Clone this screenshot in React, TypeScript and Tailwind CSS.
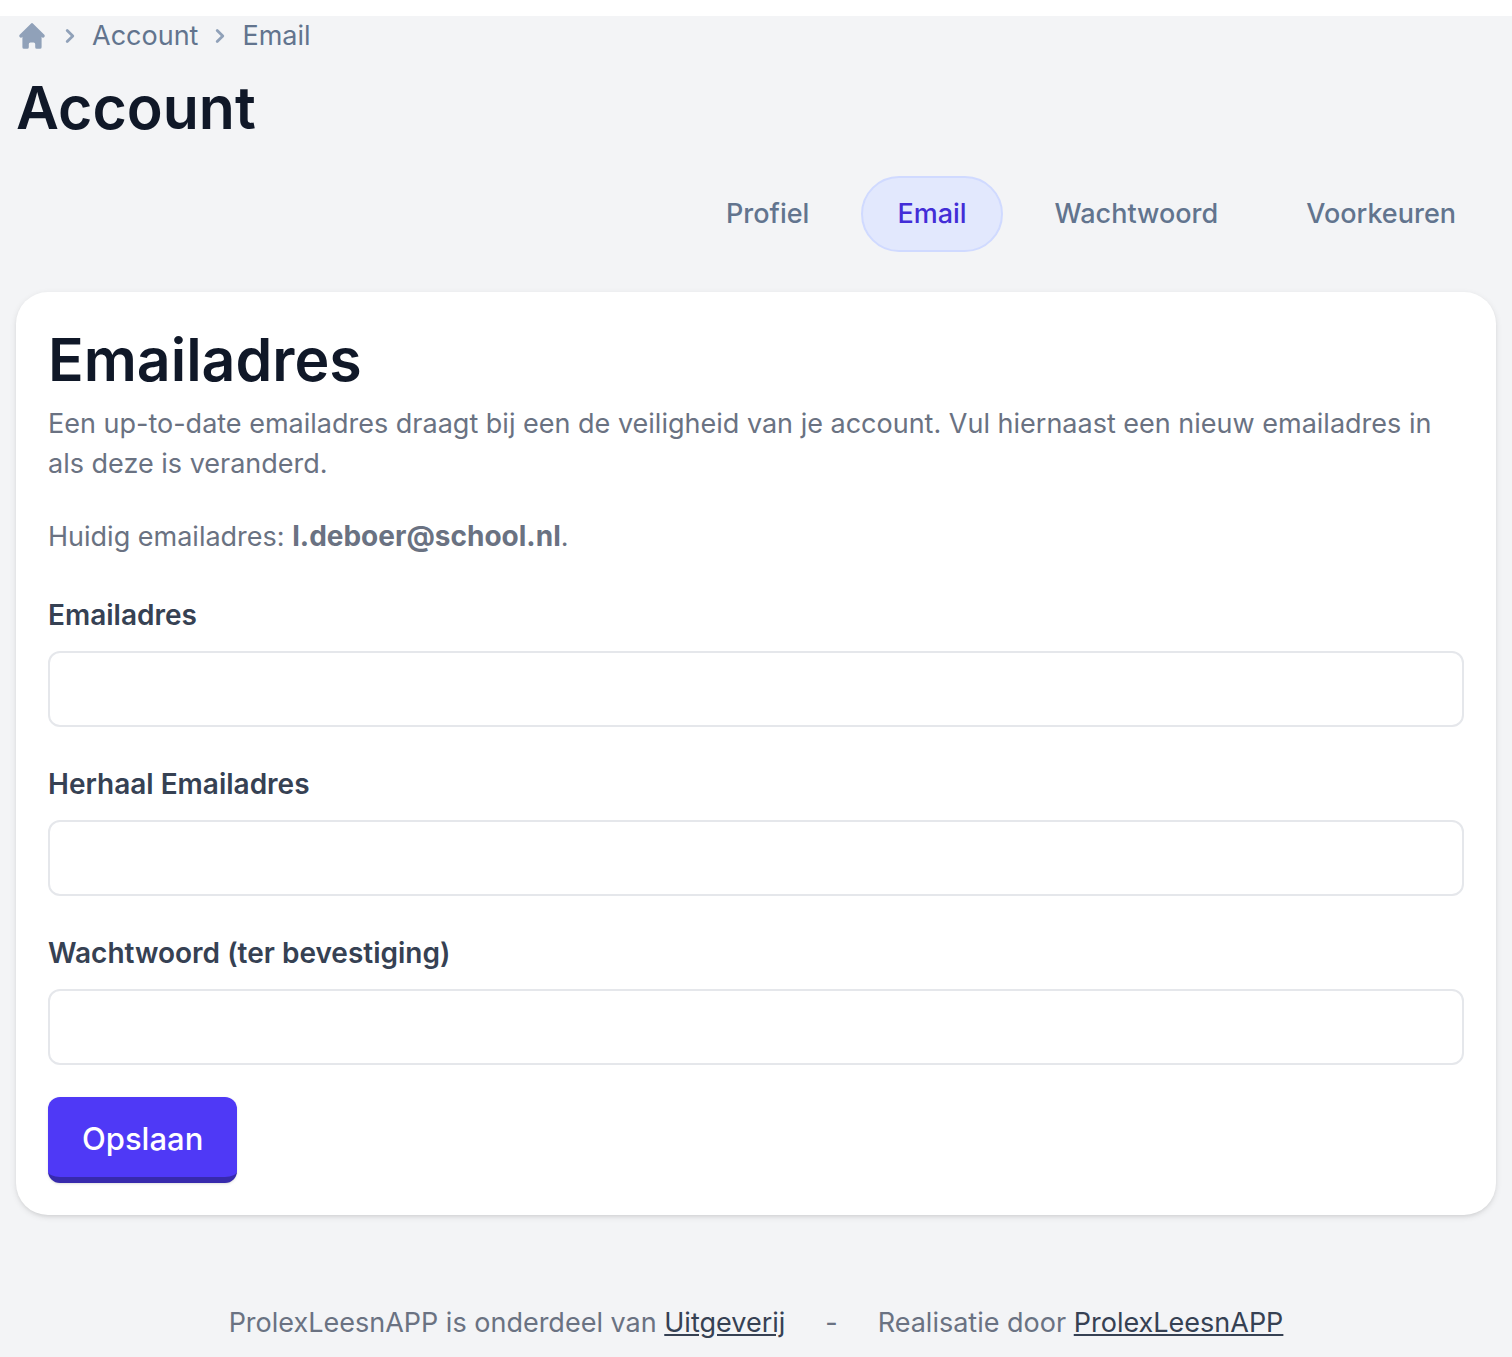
import React from "react";

const tabs = ["Profiel", "Email", "Wachtwoord", "Voorkeuren"];
const activeTab = "Email";

const fields = [
  { id: "email", label: "Emailadres", type: "email" },
  { id: "email-repeat", label: "Herhaal Emailadres", type: "email" },
  { id: "password", label: "Wachtwoord (ter bevestiging)", type: "password" },
];

function Chevron() {
  return (
    <svg viewBox="0 0 20 20" className="size-7 text-slate-400" fill="currentColor" aria-hidden="true">
      <path
        fillRule="evenodd"
        clipRule="evenodd"
        d="M7.293 14.707a1 1 0 0 1 0-1.414L10.586 10 7.293 6.707a1 1 0 0 1 1.414-1.414l4 4a1 1 0 0 1 0 1.414l-4 4a1 1 0 0 1-1.414 0z"
      />
    </svg>
  );
}

function Breadcrumbs() {
  return (
    <nav aria-label="Breadcrumb" className="flex h-10 items-center gap-2 text-[27px] leading-10 text-slate-500">
      <a href="#" aria-label="Home" className="text-slate-400">
        <svg viewBox="0 0 20 20" className="size-8" fill="currentColor" aria-hidden="true">
          <path d="M10.707 2.293a1 1 0 0 0-1.414 0l-7 7a1 1 0 0 0 1.414 1.414L4 10.414V17a1 1 0 0 0 1 1h2a1 1 0 0 0 1-1v-2a1 1 0 0 1 1-1h2a1 1 0 0 1 1 1v2a1 1 0 0 0 1 1h2a1 1 0 0 0 1-1v-6.586l.293.293a1 1 0 0 0 1.414-1.414l-7-7z" />
        </svg>
      </a>
      <Chevron />
      <a href="#">Account</a>
      <Chevron />
      <a href="#">Email</a>
    </nav>
  );
}

function Tabs() {
  return (
    <nav aria-label="Account" className="mt-8 flex justify-end gap-4 pr-1 text-[27px] leading-10 font-medium">
      {tabs.map((label) => (
        <a
          key={label}
          href="#"
          aria-current={label === activeTab ? "page" : undefined}
          className={
            label === activeTab
              ? "rounded-full border-2 border-[#d0daff] bg-[#e2e8fd] px-[34px] py-4 text-indigo-700"
              : "rounded-full border-2 border-transparent px-[34px] py-4 text-slate-500"
          }
        >
          {label}
        </a>
      ))}
    </nav>
  );
}

export default function App() {
  return (
    <div className="flex min-h-screen flex-col bg-white pt-4 font-['Inter',sans-serif]">
      <div className="grow bg-gray-100 px-4">
        <Breadcrumbs />
        <h1 className="mt-4 text-[59px] leading-[72px] font-semibold text-gray-900">Account</h1>
        <Tabs />
        <main className="mt-10 rounded-[32px] bg-white p-8 shadow-[0_2px_6px_rgba(0,0,0,0.1),0_2px_4px_-2px_rgba(0,0,0,0.1)]">
          <h2 className="text-[59px] leading-[72px] font-semibold text-gray-900">Emailadres</h2>
          <p className="mt-2 text-[27px] leading-10 text-gray-500">
            Een up-to-date emailadres draagt bij een de veiligheid van je account. Vul hiernaast een nieuw emailadres in als deze is veranderd.
          </p>
          <p className="mt-8 text-[27px] leading-10 text-gray-500">
            Huidig emailadres: <strong className="text-[28px]">l.deboer@school.nl</strong>.
          </p>
          <form className="mt-[38px]">
            <div className="flex flex-col gap-[37px]">
              {fields.map((f) => (
                <div key={f.id}>
                  <label htmlFor={f.id} className="block text-[28px] leading-10 font-semibold text-gray-700">
                    {f.label}
                  </label>
                  <input
                    id={f.id}
                    type={f.type}
                    className="mt-4 block h-[76px] w-full rounded-xl border-2 border-gray-200 px-6 text-[28px]"
                  />
                </div>
              ))}
            </div>
            <button
              type="button"
              className="mt-8 block rounded-xl border-b-[6px] border-indigo-800 bg-indigo-600 px-[34px] pt-[22px] pb-[18px] text-[31px] leading-10 font-medium text-white shadow-sm"
            >
              Opslaan
            </button>
          </form>
        </main>
        <footer className="mt-[88px] flex flex-wrap justify-center gap-x-10 text-[27px] leading-10 text-gray-500">
          <p>
            ProlexLeesnAPP is onderdeel van{" "}
            <a href="#" className="text-gray-700 underline">Uitgeverij</a>
          </p>
          <span>-</span>
          <p>
            Realisatie door <a href="#" className="text-gray-700 underline">ProlexLeesnAPP</a>
          </p>
        </footer>
      </div>
    </div>
  );
}
